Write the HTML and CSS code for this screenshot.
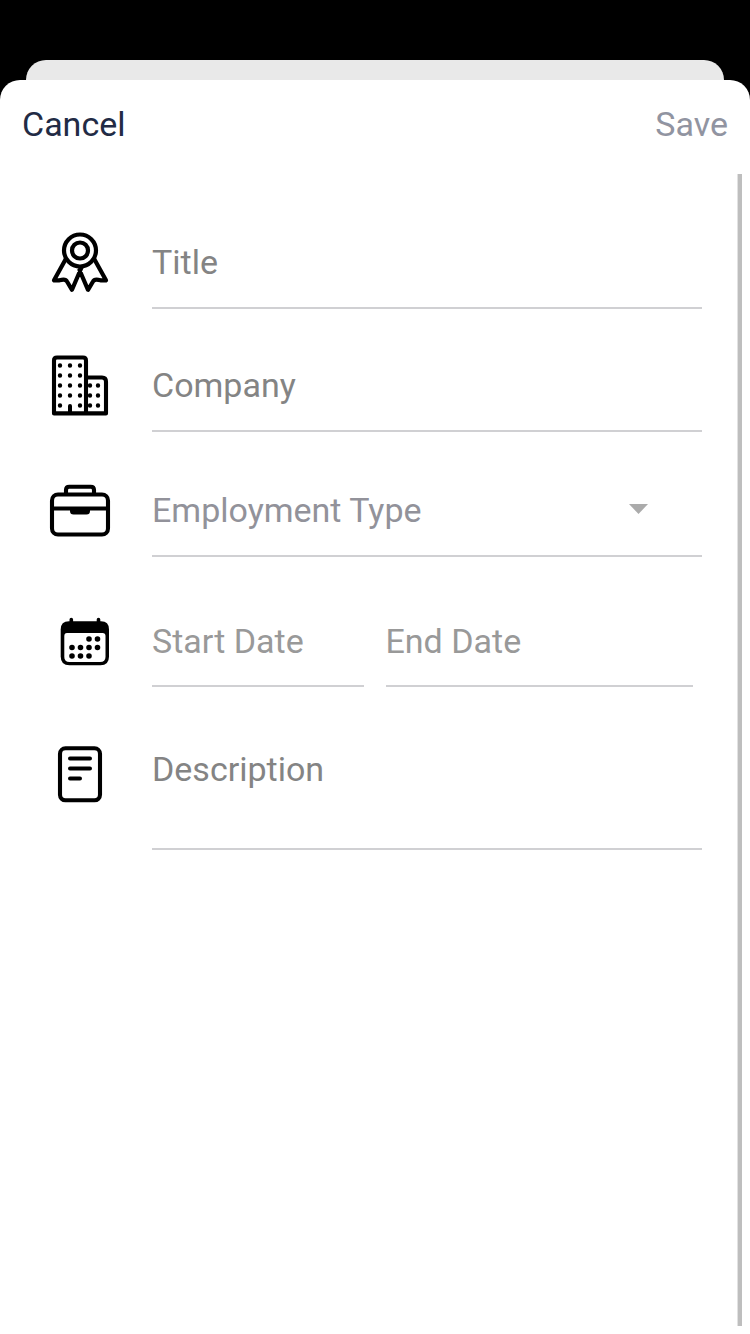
FILE: index.html
```
<!DOCTYPE html>
<html lang="en">
<head>
<meta charset="utf-8">
<title>Add Experience</title>
<link rel="stylesheet" href="styles.css">
</head>
<body>
<div class="screen">
  <div class="back-sheet"></div>
  <main class="sheet">
    <header class="toolbar">
      <span class="cancel">Cancel</span>
      <span class="save">Save</span>
    </header>
    <div class="body">
      <form class="form">
        <div class="row title">
          <svg class="icon" width="80" height="85" viewBox="0 0 80 85">
            <g fill="none" stroke="#000" stroke-width="4.2" stroke-linejoin="round" stroke-linecap="round">
              <circle cx="40" cy="30.5" r="16"/>
              <circle cx="40" cy="30.5" r="8"/>
              <path d="M25.500 39.500 14 60.300H19.500Q25.500 58.500 27 61.500L32 69.800 41.500 47.500M54.500 39.500 66 60.300H60.500Q54.500 58.500 53 61.500L48 69.800 39.500 50"/>
            </g>
          </svg>
          <div class="field"><span>Title</span></div>
        </div>
        <div class="row company">
          <svg class="icon" width="80" height="80" viewBox="0 0 80 80">
            <path d="M14 68.400V15.500Q14 12.500 17 12.500H43Q46 12.500 46 15.500V68.400M46 32.500H62Q66 32.500 66 36.500V68.400H14" fill="none" stroke="#000" stroke-width="4.100" stroke-linejoin="round" stroke-linecap="round"/>
            <path d="M28 69V61a2 2 0 0 1 4 0V69z"/>
            <path d="M20 20.500h0M30 20.500h0M40 20.500h0M20 30.500h0M30 30.500h0M40 30.500h0M20 40.500h0M30 40.500h0M40 40.500h0M20 50.500h0M30 50.500h0M40 50.500h0M20 60.500h0M40 60.500h0M50 40.500h0M58 40.500h0M50 50.500h0M58 50.500h0M50 60.500h0M58 60.500h0" stroke="#000" stroke-width="4.400" stroke-linecap="round"/>
          </svg>
          <div class="field"><span>Company</span></div>
        </div>
        <div class="row employment">
          <svg class="icon" width="80" height="70" viewBox="0 0 80 70">
            <g fill="none" stroke="#000" stroke-width="4.100">
              <rect x="12" y="19.500" width="56" height="40" rx="6"/>
              <path d="M26 20V15Q26 11.700 29.300 11.700H50.700Q54 11.700 54 15V20M12 33.500H68"/>
            </g>
            <path d="M30 33H50V36Q50 39.500 46.500 39.500H33.500Q30 39.500 30 36z"/>
          </svg>
          <div class="field">
            <span>Employment Type</span>
            <svg class="caret" width="19" height="10" viewBox="0 0 19 10"><path d="M0 0H19L9.500 10z"/></svg>
          </div>
        </div>
        <div class="row dates">
          <svg class="icon" width="80" height="70" viewBox="0 0 80 70">
            <path d="M29 16.300H61Q69 16.300 69 24.500V51.500Q69 60.300 60.500 60.300H29.500Q20.700 60.300 20.700 51.500V24.500Q20.700 16.300 29 16.300z"/>
            <path d="M31.300 14.500V20M58.500 14.500V20" stroke="#000" stroke-width="3.600" stroke-linecap="round"/>
            <path d="M27 28H62.500Q65.500 28 65.500 31V52Q65.500 57 60 57H29.500Q24.300 57 24.300 52V31Q24.300 28 27 28z" fill="#fff"/>
            <path d="M49 34h0M57.500 34h0M32 42.500h0M40.500 42.500h0M49 42.500h0M57.500 42.500h0M32 51h0M40.500 51h0M49 51h0" stroke="#000" stroke-width="5.600" stroke-linecap="round"/>
          </svg>
          <div class="field start"><span>Start Date</span></div>
          <div class="field end"><span>End Date</span></div>
        </div>
        <div class="row description">
          <svg class="icon" width="80" height="75" viewBox="0 0 80 75">
            <rect x="20" y="13.300" width="40" height="52" rx="5.500" fill="none" stroke="#000" stroke-width="4.100"/>
            <path d="M30 23.500H50M30 33.500H50M30 43.500H40" stroke="#000" stroke-width="4" stroke-linecap="round"/>
          </svg>
          <div class="field"><span>Description</span></div>
        </div>
      </form>
      <div class="scrollbar"></div>
    </div>
  </main>
</div>
</body>
</html>
```
FILE: styles.css
```
body {
  margin: 0;
  background: #000;
  font: 34px/40px Roboto, "Liberation Sans", sans-serif;
}
.screen {
  display: flex;
  flex-direction: column;
  height: 1334px;
  padding-top: 60px;
  box-sizing: border-box;
  overflow: hidden;
}
.back-sheet {
  height: 20px;
  margin: 0 26px;
  background: #e9e9e9;
  border-radius: 20px 20px 0 0;
}
.sheet {
  flex: 1;
  display: flex;
  flex-direction: column;
  background: #fff;
  border-radius: 20px 20px 0 0;
}
.toolbar {
  display: flex;
  flex: none;
  justify-content: space-between;
  height: 70px;
  padding: 24px 22px 0;
}
.cancel { color: #222b45; }
.save { color: #9194a1; }
.body {
  display: flex;
  flex: 1;
  justify-content: space-between;
}
.scrollbar {
  width: 4px;
  margin: 0 8px 8px 0;
  background: #bebebe;
  border-left: 1px solid #e2e2e2;
}
.form {
  width: 703px;
  color: #848484;
}
.row {
  display: flex;
  align-items: flex-end;
  box-sizing: border-box;
  padding-left: 40px;
}
.icon {
  flex: none;
  margin-right: 32px;
}
.field {
  display: flex;
  justify-content: space-between;
  align-items: flex-start;
  box-sizing: border-box;
  width: 550px;
  height: 67px;
  border-bottom: 2px solid #d0d0d3;
}
.title { height: 135px; }
.title .icon { margin-bottom: 4px; }
.company { height: 123px; }
.company .icon { margin-bottom: 7px; }
.employment { height: 125px; color: #92929a; }
.employment .icon { margin-bottom: 12px; }
.caret {
  margin: 14px 54px 0 0;
  fill: #ababab;
}
.dates { height: 130px; color: #999; }
.dates .icon { margin-bottom: 12px; }
.dates .field { height: 66px; }
.dates .start { width: 212px; margin-right: 21.500px; }
.dates .end { width: 307px; }
.description { height: 163px; }
.description .icon { margin-bottom: 40px; }
.description .field { height: 101px; }
```
